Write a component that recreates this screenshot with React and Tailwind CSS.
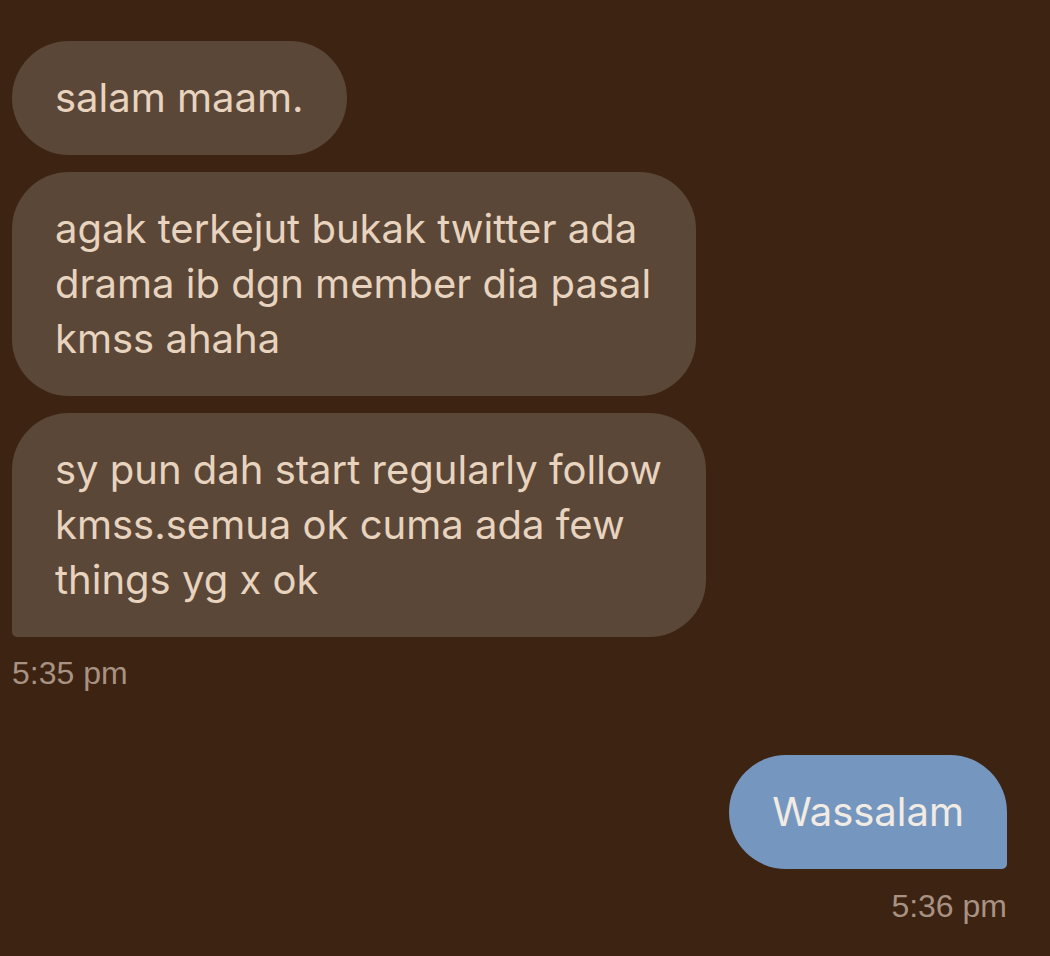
import React from "react";

const messages = [
    { text: "salam maam.", width: "w-fit", tail: false },
    { text: "agak terkejut bukak twitter ada drama ib dgn member dia pasal kmss ahaha", width: "w-[684px]", tail: false },
    { text: "sy pun dah start regularly follow kmss.semua ok cuma ada few things yg x ok", width: "w-[694px]", tail: true },
];

const App = () => {
    return (
        <div className="min-h-[956px] w-[1050px] bg-[#3d2312] pl-3 pr-[43px] pt-[41px] font-['Inter',sans-serif]">
            <div className="flex flex-col items-start gap-[17px]">
                {messages.map((m, i) => (
                    <div
                        key={i}
                        className={`${m.width} bg-[#5a4737] px-[43px] pt-[29px] pb-[30px] text-[40px] leading-[55px] text-[#e8d3bf] rounded-[57px] ${m.tail ? "rounded-bl-[5px]" : ""}`}
                    >
                        {m.text}
                    </div>
                ))}
            </div>
            <p className="mt-[18px] text-[32px] leading-[36px] text-[#a89283] font-['Liberation_Sans',sans-serif]">5:35 pm</p>

            <div className="mt-[64px] flex flex-col items-end">
                <div className="bg-[#7597bf] px-[43px] pt-[29px] pb-[30px] text-[40px] leading-[55px] text-[#f2ebe4] rounded-[57px] rounded-br-[5px]">
                    Wassalam
                </div>
                <p className="mt-[19px] text-[32px] leading-[36px] text-[#a89283] font-['Liberation_Sans',sans-serif]">5:36 pm</p>
            </div>
        </div>
    );
};

export default App;
